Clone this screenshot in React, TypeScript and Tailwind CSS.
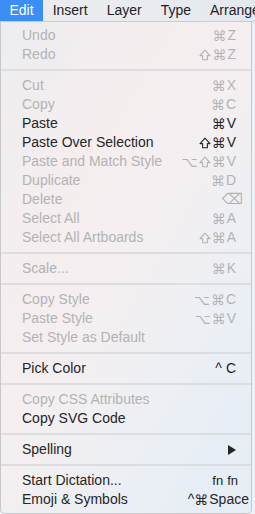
import React from "react";

type Item =
  | { type: "sep" }
  | { type: "item"; label: string; sc?: string; on?: boolean; scClass?: string };

const SEP: Item = { type: "sep" };

const items: Item[] = [
  { type: "item", label: "Undo", sc: "⌘Z" },
  { type: "item", label: "Redo", sc: "⇧⌘Z" },
  SEP,
  { type: "item", label: "Cut", sc: "⌘X" },
  { type: "item", label: "Copy", sc: "⌘C" },
  { type: "item", label: "Paste", sc: "⌘V", on: true },
  { type: "item", label: "Paste Over Selection", sc: "⇧⌘V", on: true },
  { type: "item", label: "Paste and Match Style", sc: "⌥⇧⌘V" },
  { type: "item", label: "Duplicate", sc: "⌘D" },
  { type: "item", label: "Delete", sc: "⌫", scClass: "mr-[-7px]" },
  { type: "item", label: "Select All", sc: "⌘A" },
  { type: "item", label: "Select All Artboards", sc: "⇧⌘A" },
  SEP,
  { type: "item", label: "Scale...", sc: "⌘K" },
  SEP,
  { type: "item", label: "Copy Style", sc: "⌥⌘C" },
  { type: "item", label: "Paste Style", sc: "⌥⌘V" },
  { type: "item", label: "Set Style as Default" },
  SEP,
  { type: "item", label: "Pick Color", sc: "^ C", on: true },
  SEP,
  { type: "item", label: "Copy CSS Attributes" },
  { type: "item", label: "Copy SVG Code", on: true },
  SEP,
  { type: "item", label: "Spelling", sc: "▶", on: true },
  SEP,
  { type: "item", label: "Start Dictation...", sc: "fn fn", on: true, scClass: "text-[13px] mr-[-2px]" },
  { type: "item", label: "Emoji & Symbols", sc: "^⌘Space", on: true, scClass: "mr-[-13px]" },
];

function ShiftIcon() {
  return (
    <svg width="12" height="12" viewBox="0 0 12 12" className="mr-[1px]">
      <path
        d="M6 1.2 L11 6.6 H8.4 V10.8 H3.6 V6.6 H1 Z"
        fill="none"
        stroke="currentColor"
        strokeWidth="1.1"
        strokeLinejoin="round"
      />
    </svg>
  );
}

function Shortcut({ sc, cls }: { sc: string; cls?: string }) {
  const chars = Array.from(sc);
  return (
    <span className={"flex items-center " + (cls ?? "")}>
      {chars.map((c, i) => {
        if (c === "⇧") return <ShiftIcon key={i} />;
        if (c === "⌘" || c === "⌥") {
          return (
            <span
              key={i}
              className="text-[14px] leading-none mr-[1px]"
              style={{ fontFamily: '"DejaVu Sans", sans-serif' }}
            >
              {c}
            </span>
          );
        }
        if (c === "⌫") {
          return (
            <span key={i} className="text-[15px] leading-none" style={{ fontFamily: '"DejaVu Sans", sans-serif' }}>
              {c}
            </span>
          );
        }
        if (c === "▶") {
          return (
            <svg key={i} width="8" height="10" viewBox="0 0 8 10">
              <path d="M0 0 L8 5 L0 10 Z" fill="currentColor" />
            </svg>
          );
        }
        return (
          <span key={i} className={c === " " ? "w-[4px]" : ""}>
            {c === " " ? "" : c}
          </span>
        );
      })}
    </span>
  );
}

export default function App() {
  const font = { fontFamily: '"Liberation Sans", Arial, sans-serif' };
  const menus = ["Edit", "Insert", "Layer", "Type", "Arrange"];
  return (
    <div
      className="relative w-[255px] h-[514px] overflow-hidden bg-[#eef1f5] text-[14px]"
      style={font}
    >
      <div className="flex h-[22px] items-stretch overflow-hidden border-b border-[#c9cbcf] bg-[linear-gradient(90deg,#ececee_0%,#e9ebef_60%,#e3e9f0_100%)]">
        {menus.map((m, i) => (
          <div
            key={m}
            className={
              i === 0
                ? "flex shrink-0 items-center px-[9.5px] bg-[#3b8ef5] text-white whitespace-nowrap"
                : "flex shrink-0 items-center px-[9.5px] text-[#1f1f1f] whitespace-nowrap"
            }
          >
            {m}
          </div>
        ))}
      </div>
      <div className="w-[252px] pt-[4px] pb-[4px] border-x border-b border-[#c6c8cc] rounded-b-[5px] bg-[linear-gradient(120deg,#eeedef_0%,#f5eeef_30%,#f4eff1_50%,#ebeff5_75%,#e5edf6_100%)]">
        {items.map((it, i) =>
          it.type === "sep" ? (
            <div key={i} className="h-[12px] flex items-center">
              <div className="w-full h-[2px] bg-[#dcdde0]" />
            </div>
          ) : (
            <div
              key={i}
              className={
                "flex h-[19px] items-center justify-between pl-[21px] pr-[15px] whitespace-nowrap " +
                (it.on ? "text-[#262626]" : "text-[#b3b3b5]")
              }
            >
              <span>{it.label}</span>
              {it.sc ? <Shortcut sc={it.sc} cls={it.scClass} /> : null}
            </div>
          )
        )}
      </div>
    </div>
  );
}
